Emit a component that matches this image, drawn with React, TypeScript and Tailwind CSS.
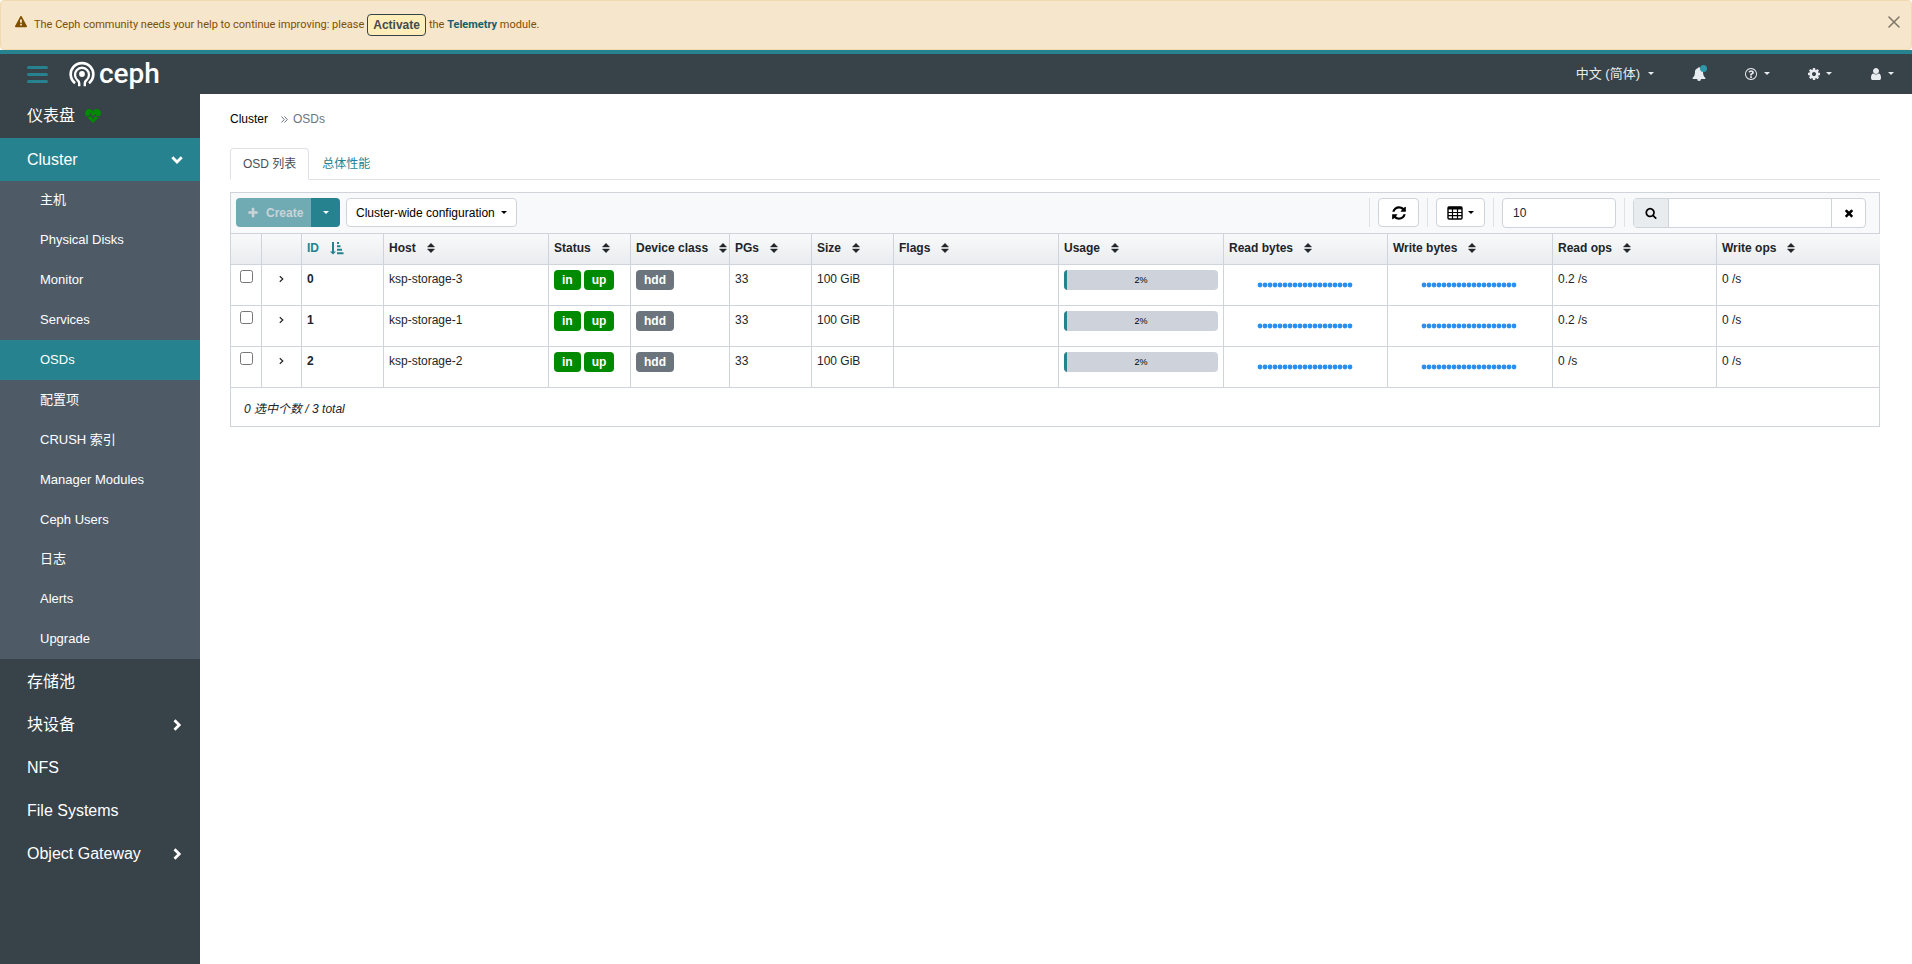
import { useState } from "react";
import { FaHeartbeat } from "react-icons/fa";
import { clsx } from "clsx";

const iconPaths = {
  plus: "M1600 736v192q0 40-28 68t-68 28h-416v416q0 40-28 68t-68 28h-192q-40 0-68-28t-28-68v-416h-416q-40 0-68-28t-28-68v-192q0-40 28-68t68-28h416v-416q0-40 28-68t68-28h192q40 0 68 28t28 68v416h416q40 0 68 28t28 68z",
  times: "M1490 1322q0 40-28 68l-136 136q-28 28-68 28t-68-28l-294-294-294 294q-28 28-68 28t-68-28l-136-136q-28-28-28-68t28-68l294-294-294-294q-28-28-28-68t28-68l136-136q28-28 68-28t68 28l294 294 294-294q28-28 68-28t68 28l136 136q28 28 28 68t-28 68l-294 294 294 294q28 28 28 68z",
  search: "M1216 832q0-185-131.500-316.500t-316.500-131.500-316.500 131.500-131.500 316.500 131.500 316.500 316.500 131.500 316.500-131.500 131.500-316.500zm512 832q0 52-38 90t-90 38q-54 0-90-38l-343-342q-179 124-399 124-143 0-273.500-55.500t-225-150-150-225-55.500-273.500 55.500-273.500 150-225 225-150 273.500-55.500 273.500 55.500 225 150 150 225 55.500 273.500q0 220-124 399l343 343q37 37 37 90z",
  cog: "M1152 896q0-106-75-181t-181-75-181 75-75 181 75 181 181 75 181-75 75-181zm512-109v222q0 12-8 23t-20 13l-185 28q-19 54-39 91 35 50 107 138 10 12 10 25t-9 23q-27 37-99 108t-94 71q-12 0-26-9l-138-108q-44 23-91 38-16 136-29 186-7 28-36 28h-222q-14 0-24.500-8.500t-11.500-21.500l-28-184q-49-16-90-37l-141 107q-10 9-25 9-14 0-25-11-126-114-165-168-7-10-7-23 0-12 8-23 15-21 51-66.500t54-70.500q-27-50-41-99l-183-27q-13-2-21-12.500t-8-23.500v-222q0-12 8-23t19-13l186-28q14-46 39-92-40-57-107-138-10-12-10-24 0-10 9-23 26-36 98.500-107.500t94.500-71.500q13 0 26 10l138 107q44-23 91-38 16-136 29-186 7-28 36-28h222q14 0 24.500 8.500t11.500 21.500l28 184q49 16 90 37l142-107q9-9 24-9 13 0 25 10 129 119 165 170 7 8 7 22 0 12-8 23-15 21-51 66.500t-54 70.500q26 50 41 98l183 28q13 2 21 12.500t8 23.500z",
  user: "M1536 1399q0 109-62.500 187t-150.500 78h-854q-88 0-150.500-78t-62.500-187q0-85 8.500-160.500t31.500-152 58.500-131 94-89 134.500-34.500q131 128 313 128t313-128q76 0 134.500 34.500t94 89 58.500 131 31.500 152 8.500 160.500zm-256-887q0 159-112.500 271.500t-271.500 112.500-271.500-112.500-112.500-271.500 112.500-271.500 271.500-112.500 271.500 112.500 112.500 271.500z",
  refresh: "M1639 1056q0 5-1 7-64 268-268 434.500t-478 166.500q-146 0-282.500-55t-243.500-157l-129 129q-19 19-45 19t-45-19-19-45v-448q0-26 19-45t45-19h448q26 0 45 19t19 45-19 45l-137 137q71 66 161 102t187 36q134 0 250-65t186-179q11-17 53-117 8-23 30-23h192q13 0 22.500 9.500t9.500 22.500zm25-800v448q0 26-19 45t-45 19h-448q-26 0-45-19t-19-45 19-45l138-138q-148-137-349-137-134 0-250 65t-186 179q-11 17-53 117-8 23-30 23h-199q-13 0-22.500-9.500t-9.500-22.500v-7q65-268 270-434.500t480-166.500q146 0 284 55.500t245 156.500l130-129q19-19 45-19t45 19 19 45z",
  warning: "M1024 1375v-190q0-14-9.500-23.500t-22.500-9.500h-192q-13 0-22.500 9.500t-9.500 23.500v190q0 14 9.500 23.500t22.500 9.500h192q13 0 22.500-9.500t9.500-23.500zm-2-374l18-459q0-12-10-19-13-11-24-11h-220q-11 0-24 11-10 7-10 21l17 457q0 10 10 16.500t24 6.500h185q14 0 23.500-6.500t10.500-16.500zm-14-934l768 1408q35 63-2 126-17 29-46.500 46t-63.500 17h-1536q-34 0-63.500-17t-46.500-46q-37-63-2-126l768-1408q17-31 47-49t65-18 65 18 47 49z",
  help: "M1008 1200v160q0 14-9 23t-23 9h-160q-14 0-23-9t-9-23v-160q0-14 9-23t23-9h160q14 0 23 9t9 23zm256-496q0 50-15 90t-45.500 69-52 44-59.500 36q-32 18-46.500 28t-26 24-11.500 29v32q0 14-9 23t-23 9h-160q-14 0-23-9t-9-23v-68q0-35 10.500-64.500t24-47.500 39-35.500 41-25.500 44.500-21q53-25 75-43t22-49q0-42-43.500-71.500t-95.500-29.500q-56 0-95 27-29 20-80 83-9 12-25 12-11 0-19-6l-108-82q-10-7-12-20t5-23q122-192 349-192 129 0 238.500 89.500t109.500 214.500zm-368-448q-130 0-248.500 51t-204 136.500-136.500 204-51 248.500 51 248.500 136.500 204 204 136.500 248.500 51 248.500-51 204-136.500 136.500-204 51-248.500-51-248.500-136.500-204-204-136.500-248.500-51zm768 640q0 209-103 385.500t-279.500 279.500-385.500 103-385.500-103-279.500-279.500-103-385.500 103-385.500 279.500-279.500 385.500-103 385.500 103 279.500 279.500 103 385.500z",
  bell: "M912 1696q0-16-16-16-59 0-101.500-42.500t-42.500-101.500q0-16-16-16t-16 16q0 73 51.500 124.500t124.500 51.500q16 0 16-16zm816-288q0 52-38 90t-90 38h-448q0 106-75 181t-181 75-181-75-75-181h-448q-52 0-90-38t-38-90q50-42 91-88t85-119.500 74.500-158.500 50-206 19.500-260q0-152 117-282.500t307-158.500q-8-19-8-39 0-40 28-68t68-28 68 28 28 68q0 20-8 39 190 28 307 158.500t117 282.500q0 139 19.500 260t50 206 74.500 158.500 85 119.500 91 88z",
};

function Icon({ name, className }: { name: keyof typeof iconPaths; className?: string }) {
  return (
    <svg viewBox="0 0 1792 1792" fill="currentColor" className={clsx("shrink-0", className)} aria-hidden="true">
      <path d={iconPaths[name]} />
    </svg>
  );
}

function Chevron({ direction }: { direction: "down" | "right" }) {
  return (
    <svg viewBox="0 0 12 12" className="h-3 w-3 shrink-0" fill="none" stroke="currentColor" strokeWidth="2.800" aria-hidden="true">
      <path d={direction === "down" ? "M1.300 3.200L6 7.900L10.700 3.200" : "M3.500 1.300L8.200 6L3.500 10.700"} />
    </svg>
  );
}

function Caret() {
  return <span className="inline-block border-x-[3px] border-t-[3px] border-x-transparent border-t-current" />;
}

function SortIcon() {
  return (
    <svg viewBox="0 0 8 10" className="h-[10px] w-2 shrink-0" fill="currentColor" aria-hidden="true">
      <path d="M4 0.300L7.600 4H0.400zM4 9.700L7.600 6H0.400z" stroke="currentColor" strokeWidth="0.400" strokeLinejoin="round" />
    </svg>
  );
}

function SortAscIcon() {
  return (
    <svg viewBox="0 0 14 14" className="h-[14px] w-[14px] shrink-0" fill="currentColor" aria-hidden="true">
      <path d="M2 1h2v9.500H6L3 13.500L0 10.500H2zM7 1h2v2h-2zM7 4.300h3.500v2h-3.500zM7 7.700h5v2h-5zM7 11.200h6.500v2h-6.500z" />
    </svg>
  );
}

function TableIcon() {
  return (
    <svg viewBox="0 0 16 14" className="h-[14px] w-4" fill="none" stroke="currentColor" aria-hidden="true">
      <rect x="1" y="1" width="14" height="12" rx="1" strokeWidth="1.400" />
      <path d="M1 2.200h14" strokeWidth="2.600" />
      <path d="M5.500 2v11M10.500 2v11M1 6.500h14M1 9.700h14" strokeWidth="1.200" />
    </svg>
  );
}

function CephLogo() {
  return (
    <a href="#dashboard" className="flex items-center gap-1 text-white" aria-label="ceph">
      <svg viewBox="0 0 26 26" className="h-[26px] w-[26px]" fill="none" stroke="currentColor" aria-hidden="true">
        <circle cx="13" cy="13" r="2.900" fill="currentColor" stroke="none" />
        <path d="M6 22.200A11.300 11.300 0 1 1 20 22.200" strokeWidth="2.700" />
        <path d="M10.200 25.300v-3Q10.200 20.300 8.600 19.200A7 7 0 1 1 17.400 19.200Q15.800 20.300 15.800 22.300V25.300" strokeWidth="2.400" />
      </svg>
      <span className="font-[Roboto,sans-serif] text-[28px] leading-7 font-medium">ceph</span>
    </a>
  );
}

interface MenuItem {
  label: string;
  active?: boolean;
  compact?: boolean;
}

const clusterMenu: MenuItem[] = [
  { label: "主机", compact: true },
  { label: "Physical Disks" },
  { label: "Monitor" },
  { label: "Services" },
  { label: "OSDs", active: true },
  { label: "配置项" },
  { label: "CRUSH 索引" },
  { label: "Manager Modules" },
  { label: "Ceph Users" },
  { label: "日志", compact: true },
  { label: "Alerts" },
  { label: "Upgrade" },
];

const lowerMenu = [
  { label: "存储池", expandable: false },
  { label: "块设备", expandable: true },
  { label: "NFS", expandable: false },
  { label: "File Systems", expandable: false },
  { label: "Object Gateway", expandable: true },
];

const columns = [
  { label: "ID", width: "w-[82px]", sorted: true },
  { label: "Host", width: "w-[165px]" },
  { label: "Status", width: "w-[82px]" },
  { label: "Device class", width: "w-[99px]" },
  { label: "PGs", width: "w-[82px]" },
  { label: "Size", width: "w-[82px]" },
  { label: "Flags", width: "w-[165px]" },
  { label: "Usage", width: "w-[165px]" },
  { label: "Read bytes", width: "w-[164px]" },
  { label: "Write bytes", width: "w-[165px]" },
  { label: "Read ops", width: "w-[164px]" },
  { label: "Write ops", width: "w-[163px]" },
];

const osds = [
  { id: 0, host: "ksp-storage-3", status: ["in", "up"], deviceClass: "hdd", pgs: 33, size: "100 GiB", usage: 2, readOps: "0.2 /s", writeOps: "0 /s" },
  { id: 1, host: "ksp-storage-1", status: ["in", "up"], deviceClass: "hdd", pgs: 33, size: "100 GiB", usage: 2, readOps: "0.2 /s", writeOps: "0 /s" },
  { id: 2, host: "ksp-storage-2", status: ["in", "up"], deviceClass: "hdd", pgs: 33, size: "100 GiB", usage: 2, readOps: "0 /s", writeOps: "0 /s" },
];

function TelemetryAlert({ onClose }: { onClose: () => void }) {
  return (
    <div role="alert" className="flex h-[50px] items-start justify-between rounded border border-[#f3d9b1] bg-[#f6e6cc] pt-[13px] pr-[11px] pl-[14px] text-[#7f4f00]">
      <div className="flex h-[22px] items-center font-[Roboto,sans-serif] text-[11px]">
        <Icon name="warning" className="mr-[7px] mb-[6px] h-3 w-3" />
        <span>The Ceph community needs your help to continue improving: please</span>
        <button className="mx-[3px] h-[22px] rounded border border-[#374249] bg-[#ffedba] px-[5px] font-['Liberation_Sans',sans-serif] text-xs font-bold text-[#434a50]">
          Activate
        </button>
        <span>
          the <a href="#telemetry" className="font-bold text-[#14606b]">Telemetry</a> module.
        </span>
      </div>
      <button aria-label="Close" onClick={onClose} className="mt-[2px] text-[#7d7568]">
        <svg viewBox="0 0 12 12" className="h-3 w-3" stroke="currentColor" strokeWidth="1.500" strokeLinecap="round">
          <path d="M1 1l10 10M11 1L1 11" />
        </svg>
      </button>
    </div>
  );
}

function Navbar() {
  return (
    <header className="flex h-11 items-center justify-between border-t-4 border-[#25828e] bg-[#374249] pr-[18px] pl-[27px] text-[#e9ecef]">
      <div className="flex items-center gap-[21px]">
        <button aria-label="Toggle navigation" className="flex w-[21px] flex-col gap-1">
          <span className="h-[3px] rounded-sm bg-[#25828e]" />
          <span className="h-[3px] rounded-sm bg-[#25828e]" />
          <span className="h-[3px] rounded-sm bg-[#25828e]" />
        </button>
        <CephLogo />
      </div>
      <nav className="flex items-center text-[13px]">
        <button className="flex items-center gap-2">
          中文 (简体) <Caret />
        </button>
        <button aria-label="Notifications" className="relative ml-[38px]">
          <Icon name="bell" className="h-[14px] w-[14px]" />
          <span className="absolute -top-[2px] -right-px h-[7px] w-[7px] rounded-full bg-[#2b99a8]" />
        </button>
        <button aria-label="Help" className="ml-[38px] flex items-center gap-[6px]">
          <Icon name="help" className="h-[14px] w-[14px]" /> <Caret />
        </button>
        <button aria-label="Settings" className="ml-[37px] flex items-center gap-[5px]">
          <Icon name="cog" className="h-[14px] w-[14px]" /> <Caret />
        </button>
        <button aria-label="Account" className="ml-[37px] flex items-center gap-[5px]">
          <Icon name="user" className="h-[14px] w-[14px]" /> <Caret />
        </button>
      </nav>
    </header>
  );
}

function Sidebar() {
  return (
    <nav className="w-[200px] shrink-0 bg-[#374249] text-base text-white">
      <a href="#dashboard" className="flex h-11 items-center gap-[10px] pl-[27px]">
        仪表盘 <FaHeartbeat className="h-4 w-4 text-[#008a00]" />
      </a>
      <a href="#cluster" className="flex h-[43px] items-center justify-between bg-[#25828e] pr-[17px] pl-[27px]">
        Cluster <Chevron direction="down" />
      </a>
      <ul className="bg-[#4e5b66] text-[13px]">
        {clusterMenu.map((item) => (
          <li key={item.label}>
            <a
              href="#cluster"
              className={clsx("flex items-center pl-10", item.compact ? "h-[39px] pb-[2px]" : "h-10", item.active && "bg-[#25828e]")}
            >
              {item.label}
            </a>
          </li>
        ))}
      </ul>
      <ul className="pt-px">
        {lowerMenu.map((item) => (
          <li key={item.label}>
            <a href="#menu" className="flex h-[43px] items-center justify-between pr-[17px] pl-[27px]">
              {item.label}
              {item.expandable && <Chevron direction="right" />}
            </a>
          </li>
        ))}
      </ul>
    </nav>
  );
}

function Divider() {
  return <span className="h-[29px] w-px bg-[#dee2e6]" />;
}

function Toolbar() {
  return (
    <div className="flex h-10 items-center justify-between bg-[#f8f9fb] pr-[13px] pb-px pl-[5px]">
      <div className="flex items-center gap-[6px]">
        <div className="flex h-[29px]">
          <button disabled className="flex w-[75px] items-center gap-[7px] rounded-l bg-[#70abb4] pl-[11px] font-bold text-[#c9d3d8]">
            <Icon name="plus" className="h-3 w-3" /> Create
          </button>
          <button aria-label="More actions" className="flex w-[29px] items-center justify-center rounded-r bg-[#25828e] text-white">
            <Caret />
          </button>
        </div>
        <button className="flex h-[29px] items-center gap-[6px] rounded border border-[#ced4da] bg-white px-[9px] text-black">
          Cluster-wide configuration <Caret />
        </button>
      </div>
      <div className="flex items-center gap-2">
        <Divider />
        <button aria-label="Refresh" className="flex h-[29px] w-[41px] items-center justify-center rounded border border-[#ced4da] bg-white text-black">
          <Icon name="refresh" className="h-4 w-4" />
        </button>
        <Divider />
        <button aria-label="Columns" className="flex h-[29px] w-[49px] items-center justify-center gap-[5px] rounded border border-[#ced4da] bg-white text-black">
          <TableIcon /> <Caret />
        </button>
        <Divider />
        <input aria-label="Rows per page" defaultValue="10" className="h-[30px] w-[114px] rounded border border-[#ced4da] bg-white px-[10px]" />
        <Divider />
        <div className="flex h-[30px] rounded border border-[#ced4da] bg-white">
          <label htmlFor="search" className="flex w-[35px] items-center justify-center border-r border-[#ced4da] bg-[#e9ecef] text-black">
            <Icon name="search" className="h-3 w-3" />
          </label>
          <input id="search" aria-label="Search" className="w-[162px] px-2 outline-none" />
          <button aria-label="Clear" className="flex w-[34px] items-center justify-center border-l border-[#ced4da] text-black">
            <Icon name="times" className="h-3 w-3" />
          </button>
        </div>
      </div>
    </div>
  );
}

function Sparkline() {
  return (
    <svg viewBox="0 0 96 6" className="mt-[12px] ml-7 h-[6px] w-24" fill="#2b8ff0" aria-hidden="true">
      {Array.from({ length: 19 }, (_, i) => (
        <circle key={i} cx={3 + i * 5} cy={3} r={2.4} />
      ))}
    </svg>
  );
}

function OsdTable() {
  const [selected, setSelected] = useState<number[]>([]);

  const toggle = (id: number) => {
    setSelected((prev) => (prev.includes(id) ? prev.filter((s) => s !== id) : [...prev, id]));
  };

  const cell = "border-r border-b border-[#ced4da] p-[5px] align-top last:border-r-0";

  return (
    <section className="mt-3 border border-[#ced4da]">
      <Toolbar />
      <table className="w-full table-fixed border-separate border-spacing-0 border-t border-[#ced4da] text-left leading-[18px]">
        <thead>
          <tr className="h-[31px] bg-linear-to-b from-[#f8f9fa] to-[#e9ecef]">
            <th aria-label="Select" className="w-[31px] border-r border-b border-[#ced4da]" />
            <th aria-label="Expand" className="w-10 border-r border-b border-[#ced4da]" />
            {columns.map((col) => (
              <th key={col.label} className={clsx("border-r border-b border-[#ced4da] pb-[3px] pl-[5px] last:border-r-0", col.width)}>
                <button className={clsx("flex items-center gap-[11px] font-bold whitespace-nowrap", col.sorted && "text-[#25828e]")}>
                  {col.label} {col.sorted ? <SortAscIcon /> : <SortIcon />}
                </button>
              </th>
            ))}
          </tr>
        </thead>
        <tbody>
          {osds.map((osd) => (
            <tr key={osd.id} className="h-[41px]">
              <td className="border-r border-b border-[#ced4da] pt-[5px] text-center align-top">
                <input
                  type="checkbox"
                  aria-label={`Select OSD ${osd.id}`}
                  checked={selected.includes(osd.id)}
                  onChange={() => toggle(osd.id)}
                  className="mx-auto block h-[13px] w-[13px]"
                />
              </td>
              <td className={cell}>
                <button aria-label={`Expand OSD ${osd.id}`} className="mx-auto flex h-[18px] w-4 items-center justify-center">
                  <svg viewBox="0 0 5 8" className="h-2 w-[5px]" fill="none" stroke="currentColor" strokeWidth="1.200">
                    <path d="M0.800 1.200L3.800 4L0.800 6.800" />
                  </svg>
                </button>
              </td>
              <td className={clsx(cell, "font-bold")}>{osd.id}</td>
              <td className={cell}>{osd.host}</td>
              <td className={cell}>
                <div className="flex gap-[3px]">
                  {osd.status.map((s) => (
                    <span key={s} className="h-5 rounded bg-[#008a00] px-2 leading-5 font-bold text-white">{s}</span>
                  ))}
                </div>
              </td>
              <td className={cell}>
                <span className="block h-5 w-fit rounded bg-[#6c757d] px-2 leading-5 font-bold text-white">{osd.deviceClass}</span>
              </td>
              <td className={cell}>{osd.pgs}</td>
              <td className={cell}>{osd.size}</td>
              <td className={cell} />
              <td className={cell}>
                <div className="relative h-5 overflow-hidden rounded bg-[#ced3db] text-center text-[9px] leading-5 text-black">
                  <div className="absolute inset-y-0 left-0 bg-[#25828e]" style={{ width: `${osd.usage}%` }} />
                  {osd.usage}%
                </div>
              </td>
              <td className={cell}><Sparkline /></td>
              <td className={cell}><Sparkline /></td>
              <td className={cell}>{osd.readOps}</td>
              <td className={cell}>{osd.writeOps}</td>
            </tr>
          ))}
        </tbody>
      </table>
      <footer className="flex h-[38px] items-center px-[13px] pt-[3px] italic">
        {selected.length} 选中个数 / {osds.length} total
      </footer>
    </section>
  );
}

export default function App() {
  const [showAlert, setShowAlert] = useState(true);

  return (
    <div className="flex min-h-screen flex-col bg-white font-['Liberation_Sans','Noto_Sans_CJK_SC',sans-serif] text-xs text-[#212529]">
      {showAlert && <TelemetryAlert onClose={() => setShowAlert(false)} />}
      <Navbar />
      <div className="flex flex-1">
        <Sidebar />
        <main className="min-w-0 flex-1 pt-4 pr-8 pb-8 pl-[30px]">
          <nav aria-label="Breadcrumb" className="flex h-[18px] items-center">
            <a href="#cluster" className="text-black">Cluster</a>
            <svg viewBox="0 0 7 7" className="mr-[5px] ml-[13px] h-[7px] w-[7px] text-[#6c757d]" fill="none" stroke="currentColor" aria-hidden="true">
              <path d="M0.500 0.500L3.300 3.500L0.500 6.500M3.500 0.500L6.300 3.500L3.500 6.500" />
            </svg>
            <span className="text-[#6c757d]">OSDs</span>
          </nav>
          <div role="tablist" className="mt-5 flex h-8 border-b border-[#dee2e6]">
            <button role="tab" aria-selected="true" className="-mb-px rounded-t border border-[#dee2e6] border-b-white bg-white px-3 text-[#495057]">
              OSD 列表
            </button>
            <button role="tab" aria-selected="false" className="px-[13px] text-[#25828e]">
              总体性能
            </button>
          </div>
          <OsdTable />
        </main>
      </div>
    </div>
  );
}
